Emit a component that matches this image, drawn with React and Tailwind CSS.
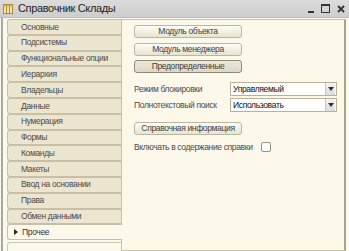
import React from "react";

const tabs = [
  "Основные",
  "Подсистемы",
  "Функциональные опции",
  "Иерархия",
  "Владельцы",
  "Данные",
  "Нумерация",
  "Формы",
  "Команды",
  "Макеты",
  "Ввод на основании",
  "Права",
  "Обмен данными",
];

function TitleBar() {
  return (
    <div className="h-[18px] flex items-center bg-gradient-to-b from-[#dcdcdc] to-[#cdcdcd] border-b border-[#bdbdbd]">
      <svg width="10" height="10" viewBox="0 0 10 10" className="ml-[3px]">
        <rect x="0.5" y="0.5" width="9" height="9" fill="#f6e7b0" stroke="#b08a30" />
        <line x1="3.5" y1="1" x2="3.5" y2="9" stroke="#b08a30" />
        <line x1="6.5" y1="1" x2="6.5" y2="9" stroke="#b08a30" />
        <line x1="1" y1="2" x2="9" y2="2" stroke="#c9a040" />
      </svg>
      <span className="ml-[5px] text-[11px] text-[#1e1e1e]">Справочник Склады</span>
      <div className="ml-auto flex items-center gap-[7px] mr-[4px]">
        <span className="w-[6px] h-[2px] bg-[#333] mt-[7px]"></span>
        <span className="w-[9px] h-[9px] border border-[#333] border-t-2"></span>
        <svg width="8" height="8" viewBox="0 0 8 8">
          <path d="M1 1L7 7M7 1L1 7" stroke="#333" strokeWidth="1.8" />
        </svg>
      </div>
    </div>
  );
}

function Tab({ label }) {
  return (
    <div className="h-[15.8px] flex items-center pl-[13px] bg-[#ece6d1] border border-r-0 border-[#c7bfa6] rounded-l-[3px] text-[#4a4a4a] whitespace-nowrap">
      {label}
    </div>
  );
}

function Btn({ children, pressed }) {
  return (
    <div
      className={
        "w-[108px] h-[13px] flex items-center justify-center rounded-[3px] border text-[#3e3e3e] whitespace-nowrap bg-gradient-to-b " +
        (pressed
          ? "border-[#8f8873] from-[#eeeadb] to-[#ddd7c3]"
          : "border-[#bdb59c] from-[#fdfcf6] to-[#e9e4d0]")
      }
    >
      {children}
    </div>
  );
}

function Select({ value }) {
  return (
    <div className="w-[107px] h-[14px] flex items-center bg-white border border-[#b9b095]">
      <span className="pl-[2px] text-[#111] flex-1">{value}</span>
      <div className="w-[10px] h-[12px] mr-px flex items-center justify-center bg-gradient-to-b from-[#f4f4f4] to-[#dcdcdc] border-l border-[#c9c9c9]">
        <svg width="6" height="4" viewBox="0 0 6 4">
          <path d="M0 0H6L3 4Z" fill="#333" />
        </svg>
      </div>
    </div>
  );
}

export default function App() {
  return (
    <div className="w-[349px] h-[251px] overflow-hidden bg-[#fbf8ec] text-[8.5px] tracking-[-0.35px] font-['Liberation_Sans',Arial,sans-serif]">
      <TitleBar />
      <div className="flex h-[233px] ml-px border-l-2 border-[#a9a9a4]">
        <div className="w-[118px] pl-[4px] pt-[1px] flex flex-col">
          {tabs.map((t) => (
            <Tab key={t} label={t} />
          ))}
          <div className="relative z-10 -mr-px h-[15.8px] flex items-center pl-[6px] bg-[#fcf9eb] border border-r-0 border-[#c7bfa6] rounded-l-[3px] text-[#333]">
            <svg width="4" height="6" viewBox="0 0 4 6" className="mr-[4px]">
              <path d="M0 0L4 3L0 6Z" fill="#222" />
            </svg>
            Прочее
          </div>
          <div className="flex-1 mt-[2px] border-l border-t border-[#cfc8b0] rounded-tl-[3px]"></div>
        </div>
        <div className="w-[225px] mt-[1px] border border-r-2 border-[#c9c2aa] border-r-[#aaa38c] bg-[#fcf9eb] pl-[12px] pt-[5px] flex flex-col text-[#4a4a4a]">
          <div className="flex flex-col gap-[4.5px]">
            <Btn>Модуль объекта</Btn>
            <Btn>Модуль менеджера</Btn>
            <Btn pressed>Предопределенные</Btn>
          </div>
          <div className="mt-[9px] flex items-center">
            <span className="w-[96px]">Режим блокировки</span>
            <Select value="Управляемый" />
          </div>
          <div className="mt-[2px] flex items-center">
            <span className="w-[96px]">Полнотекстовый поиск</span>
            <Select value="Использовать" />
          </div>
          <div className="mt-[10px]">
            <Btn>Справочная информация</Btn>
          </div>
          <div className="mt-[6px] flex items-center">
            <span>Включать в содержание справки</span>
            <span className="ml-[8px] w-[10px] h-[10px] bg-white border border-[#9c9480] rounded-[2px]"></span>
          </div>
        </div>
      </div>
    </div>
  );
}
